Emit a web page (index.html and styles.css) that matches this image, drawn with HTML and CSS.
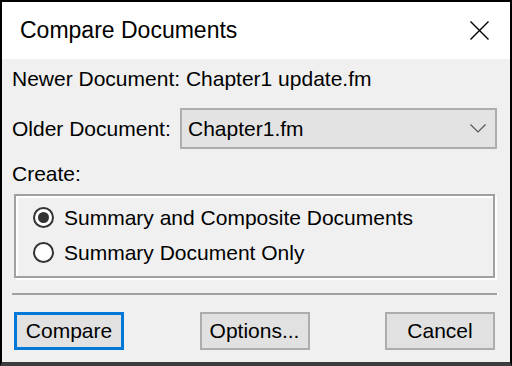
FILE: index.html
```html
<!DOCTYPE html>
<html lang="en">
<head>
  <meta charset="UTF-8">
  <title>Compare Documents</title>
  <link rel="stylesheet" href="styles.css">
</head>
<body>
  <div class="window">
    <div class="titlebar">
      <span class="title">Compare Documents</span>
      <svg class="close" width="19" height="19" viewBox="0 0 19 19">
        <path d="M0.5 0.5 L18.5 18.5 M18.5 0.5 L0.5 18.5" stroke="#000" stroke-width="1.4" fill="none"/>
      </svg>
    </div>

    <div class="content">
      <div class="row newer">Newer Document: Chapter1 update.fm</div>

      <div class="row older">
        <span class="label">Older Document:</span>
        <div class="select">
          <span>Chapter1.fm</span>
          <svg width="16" height="9" viewBox="0 0 16 9">
            <path d="M0.5 0.5 L8 8 L15.5 0.5" stroke="#555" stroke-width="1.2" fill="none"/>
          </svg>
        </div>
      </div>

      <div class="row create">Create:</div>

      <div class="group">
        <div class="option"><span class="radio on"></span>Summary and Composite Documents</div>
        <div class="option"><span class="radio"></span>Summary Document Only</div>
      </div>

      <div class="separator"></div>

      <div class="buttons">
        <button class="btn default">Compare</button>
        <button class="btn">Options...</button>
        <button class="btn">Cancel</button>
      </div>
    </div>
  </div>
</body>
</html>
```

FILE: styles.css
```css
body {
  margin: 0;
  padding: 0;
  font-family: "Liberation Sans", Arial, sans-serif;
  color: #000;
}

.window {
  width: 512px;
  height: 366px;
  box-sizing: border-box;
  border: 2px solid #000;
  border-bottom: 4px solid #3c3c3c;
  background: #f0f0f0;
  display: flex;
  flex-direction: column;
}

.titlebar {
  height: 57px;
  flex-shrink: 0;
  background: #fff;
  display: flex;
  align-items: center;
  justify-content: space-between;
  padding: 0 21px 0 18px;
}

.title {
  font-size: 23px;
}

.close {
  display: block;
}

.content {
  padding: 0 13px 0 10px;
  font-size: 21px;
}

.row {
  display: flex;
  align-items: center;
}

.newer {
  height: 39px;
}

.older {
  display: grid;
  grid-template-columns: 168px 1fr;
  align-items: center;
  margin-top: 10px;
}

.select {
  height: 41px;
  box-sizing: border-box;
  border: 2px solid #adadad;
  background: #e3e3e3;
  display: flex;
  align-items: center;
  justify-content: space-between;
  padding: 0 9px 0 6px;
}

.select svg {
  display: block;
}

.create {
  height: 24px;
  margin-top: 13px;
}

.group {
  margin: 8px 2px 0 2px;
  height: 84px;
  box-sizing: border-box;
  border: 2px solid #a0a0a0;
  box-shadow: 2px 2px 0 #fff, inset 2px 2px 0 #fff;
  padding: 4px 0 6px 17px;
}

.option {
  height: 35px;
  display: flex;
  align-items: center;
}

.radio {
  width: 21px;
  height: 21px;
  box-sizing: border-box;
  border: 2px solid #333;
  border-radius: 50%;
  background: #fff;
  margin-right: 10px;
  display: flex;
  align-items: center;
  justify-content: center;
}

.radio.on::after {
  content: "";
  width: 11px;
  height: 11px;
  border-radius: 50%;
  background: #333;
}

.separator {
  margin-top: 15px;
  height: 2px;
  background: #a0a0a0;
  box-shadow: 2px 0 0 #fff;
}

.buttons {
  display: flex;
  justify-content: space-between;
  margin-top: 17px;
  padding: 0 2px;
}

.btn {
  width: 110px;
  height: 38px;
  box-sizing: border-box;
  border: 2px solid #adadad;
  background: #e1e1e1;
  font-family: "Liberation Sans", Arial, sans-serif;
  font-size: 21px;
  color: #000;
  padding: 0;
}

.btn.default {
  border: 3px solid #0078d7;
}
```
